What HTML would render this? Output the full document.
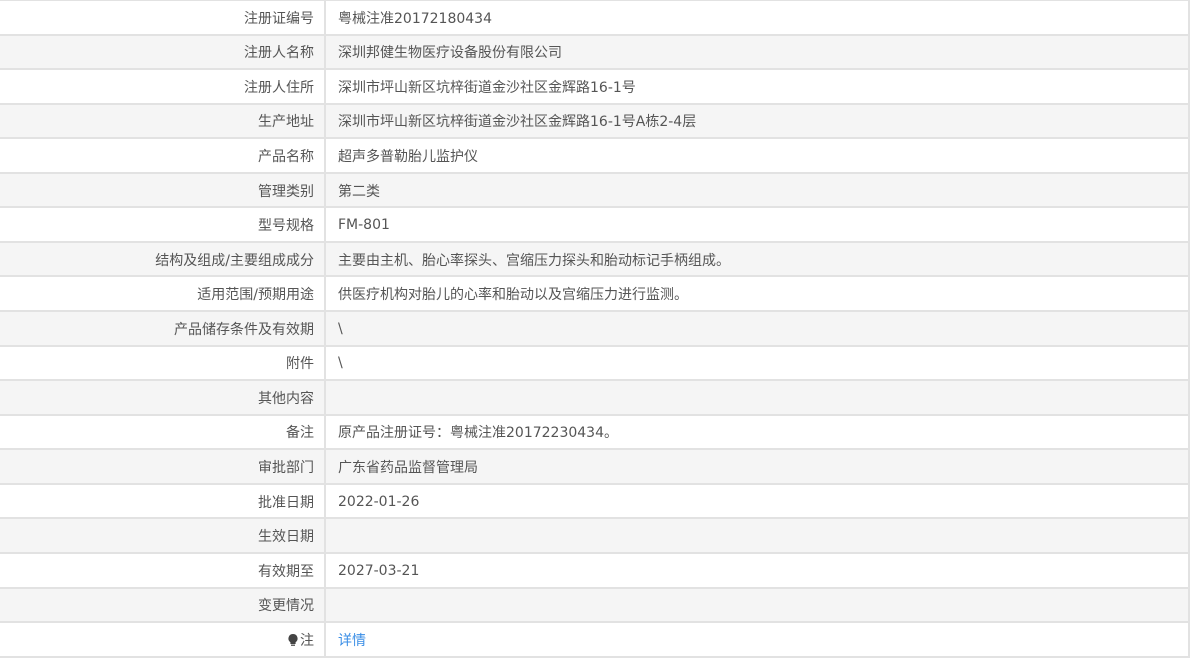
<!DOCTYPE html>
<html><head><meta charset="utf-8"><style>
body{margin:0;background:#fff;width:1200px;height:668px;overflow:hidden;font-family:"DejaVu Sans","Noto Sans CJK SC",sans-serif;font-size:14px;color:#555}
.t{position:absolute;left:0;top:0;width:1190px;height:658px;border-right:2px solid #e2e2e2;border-bottom:2px solid #e2e2e2;box-sizing:border-box}
.r{position:absolute;left:0;width:1188px;box-sizing:border-box;border-top:2px solid #e2e2e2}
.r.g{background:#f5f5f5}
.l{position:absolute;left:0;width:326px;top:0;bottom:0;border-right:2px solid #e2e2e2;box-sizing:border-box;text-align:right;padding-right:10px;display:flex;align-items:center;justify-content:flex-end}
.v{position:absolute;left:338px;top:0;bottom:0;display:flex;align-items:center}
a{color:#3a8ee6;text-decoration:none}
</style></head><body>
<div class="t" id="t"></div>
<script>
var bulb='<svg width="12" height="14" viewBox="0 0 12 14" style="margin-right:1px"><path d="M6 1a4.5 4.5 0 0 0-2.6 8.2V11h5.2V9.2A4.5 4.5 0 0 0 6 1z" fill="#444"/><rect x="4" y="11.5" width="4" height="1.5" fill="#666"/></svg>';
var d=[["注册证编号","粤械注准20172180434"],["注册人名称","深圳邦健生物医疗设备股份有限公司"],["注册人住所","深圳市坪山新区坑梓街道金沙社区金辉路16-1号"],["生产地址","深圳市坪山新区坑梓街道金沙社区金辉路16-1号A栋2-4层"],["产品名称","超声多普勒胎儿监护仪"],["管理类别","第二类"],["型号规格","FM-801"],["结构及组成/主要组成成分","主要由主机、胎心率探头、宫缩压力探头和胎动标记手柄组成。"],["适用范围/预期用途","供医疗机构对胎儿的心率和胎动以及宫缩压力进行监测。"],["产品储存条件及有效期","\\"],["附件","\\"],["其他内容",""],["备注","原产品注册证号：粤械注准20172230434。"],["审批部门","广东省药品监督管理局"],["批准日期","2022-01-26"],["生效日期",""],["有效期至","2027-03-21"],["变更情况",""],[bulb+"注","<a>详情</a>"]];
var h="",rh=34.56;
d.forEach(function(x,i){var top=i*rh-1;h+='<div class="r'+(i%2?' g':'')+'" style="top:'+top+'px;height:'+(rh+1)+'px"><div class="l">'+x[0]+'</div><div class="v">'+x[1]+'</div></div>';});
document.getElementById("t").innerHTML=h;
</script>
</body></html>
